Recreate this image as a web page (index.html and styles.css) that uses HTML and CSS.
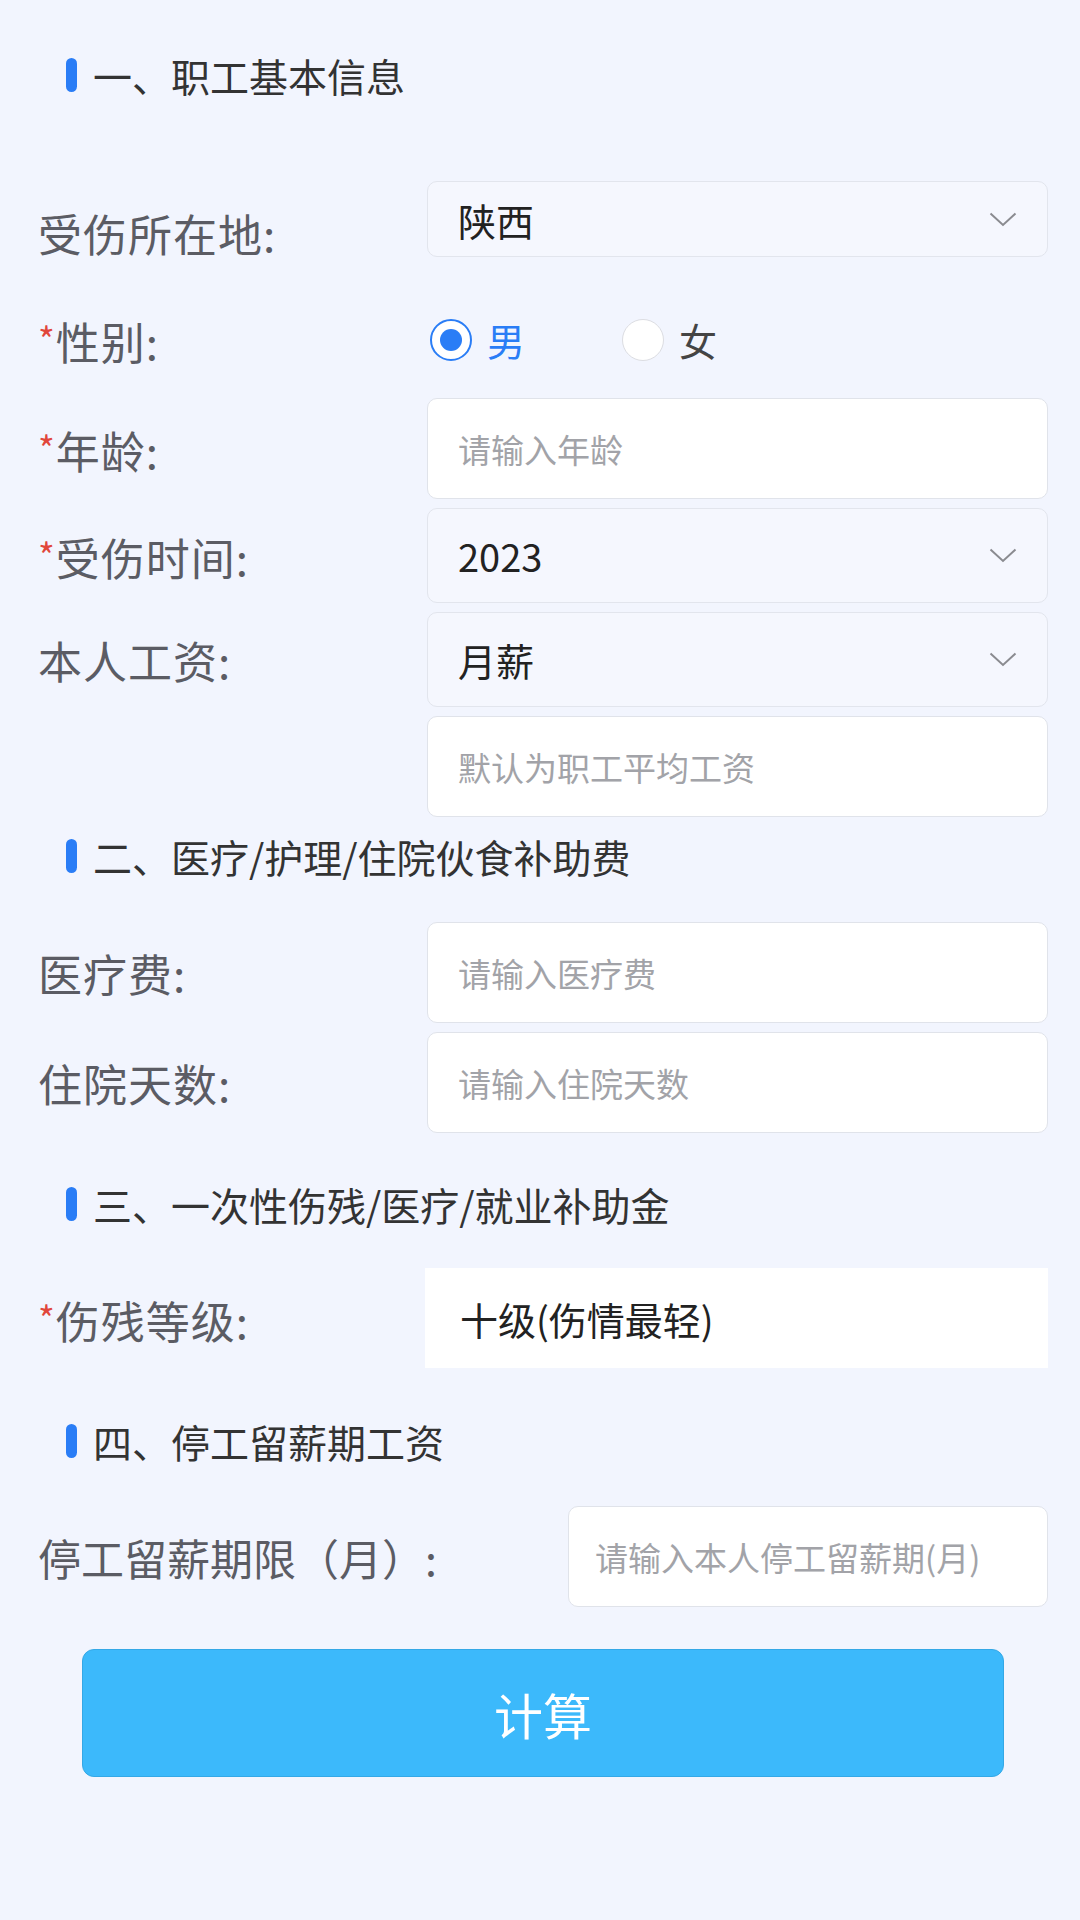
FILE: index.html
```html
<!DOCTYPE html>
<html lang="zh-CN">
<head>
    <meta charset="UTF-8">
    <meta name="viewport" content="width=device-width, initial-scale=1.0">
    <title>工伤赔偿计算器</title>
    <link rel="stylesheet" href="styles.css">
</head>
<body>
    <div class="page">
        <h2 class="section-title title-first">一、职工基本信息</h2>

        <div class="form-row row-location">
            <label class="form-label label-low">受伤所在地:</label>
            <div class="select select-small">
                <span class="select-value">陕西</span>
                <svg class="chevron" width="28" height="15" viewBox="0 0 28 15"><polyline points="1.5,1.5 14,13 26.5,1.5" fill="none" stroke="#8a8b90" stroke-width="2"/></svg>
            </div>
        </div>

        <div class="form-row row-gender">
            <label class="form-label"><span class="required">*</span>性别:</label>
            <div class="radio-group">
                <div class="radio-option checked">
                    <span class="radio"></span>
                    <span class="radio-text">男</span>
                </div>
                <div class="radio-option">
                    <span class="radio"></span>
                    <span class="radio-text">女</span>
                </div>
            </div>
        </div>

        <div class="field-group group-basic">
            <div class="form-row">
                <label class="form-label"><span class="required">*</span>年龄:</label>
                <input class="text-input" type="text" placeholder="请输入年龄">
            </div>
            <div class="form-row">
                <label class="form-label"><span class="required">*</span>受伤时间:</label>
                <div class="select">
                    <span class="select-value">2023</span>
                    <svg class="chevron" width="28" height="15" viewBox="0 0 28 15"><polyline points="1.5,1.5 14,13 26.5,1.5" fill="none" stroke="#8a8b90" stroke-width="2"/></svg>
                </div>
            </div>
            <div class="form-row">
                <label class="form-label">本人工资:</label>
                <div class="select">
                    <span class="select-value">月薪</span>
                    <svg class="chevron" width="28" height="15" viewBox="0 0 28 15"><polyline points="1.5,1.5 14,13 26.5,1.5" fill="none" stroke="#8a8b90" stroke-width="2"/></svg>
                </div>
            </div>
            <div class="form-row">
                <span class="form-label"></span>
                <input class="text-input" type="text" placeholder="默认为职工平均工资">
            </div>
        </div>

        <h2 class="section-title title-medical">二、医疗/护理/住院伙食补助费</h2>

        <div class="field-group group-medical">
            <div class="form-row">
                <label class="form-label">医疗费:</label>
                <input class="text-input" type="text" placeholder="请输入医疗费">
            </div>
            <div class="form-row">
                <label class="form-label">住院天数:</label>
                <input class="text-input" type="text" placeholder="请输入住院天数">
            </div>
        </div>

        <h2 class="section-title title-disability">三、一次性伤残/医疗/就业补助金</h2>

        <div class="form-row row-disability">
            <label class="form-label"><span class="required">*</span>伤残等级:</label>
            <div class="plain-box">十级(伤情最轻)</div>
        </div>

        <h2 class="section-title title-salary">四、停工留薪期工资</h2>

        <div class="form-row row-wide">
            <label class="form-label label-tight">停工留薪期限（月）:</label>
            <input class="text-input input-tight" type="text" placeholder="请输入本人停工留薪期(月)">
        </div>

        <button class="submit-btn" type="button">计算</button>
    </div>
</body>
</html>
```

FILE: styles.css
```css
* {
    box-sizing: border-box;
    margin: 0;
    padding: 0;
    font-family: "Noto Sans CJK SC", "Noto Sans", sans-serif;
}

body {
    background-color: #f2f5fe;
    width: 1080px;
    min-height: 1920px;
}

.page {
    padding: 0 32px 0 38px;
}

.section-title {
    display: flex;
    align-items: center;
    height: 34px;
    padding-left: 28px;
    font-size: 39px;
    font-weight: normal;
    color: #333;
    line-height: 1;
}

.section-title::before {
    content: "";
    width: 11px;
    height: 34px;
    margin-right: 16px;
    border-radius: 6px;
    background-color: #2a7df6;
    flex-shrink: 0;
}

.title-first {
    margin-top: 58px;
}

.title-medical {
    margin-top: 22px;
}

.title-disability {
    margin-top: 54px;
}

.title-salary {
    margin-top: 56px;
}

.form-row {
    display: grid;
    grid-template-columns: 389px 1fr;
    align-items: center;
}

.form-label {
    font-size: 44px;
    line-height: 44px;
    letter-spacing: 1px;
    color: #5b5c64;
    white-space: nowrap;
}

.label-low {
    align-self: start;
    margin-top: 30px;
}

.label-tight {
    font-size: 43px;
    letter-spacing: 0;
}

.required {
    color: #e1463b;
    font-size: 36px;
    vertical-align: 6px;
}

.row-location {
    margin-top: 89px;
}

.row-gender {
    margin-top: 59px;
    height: 44px;
}

.field-group {
    display: flex;
    flex-direction: column;
    gap: 9px;
}

.group-basic {
    margin-top: 38px;
}

.group-medical {
    margin-top: 49px;
}

.select {
    display: flex;
    align-items: center;
    justify-content: space-between;
    height: 95px;
    padding: 0 30px 0 30px;
    background-color: #f5f7fe;
    border: 1.5px solid #e2e5ed;
    border-radius: 10px;
}

.select-small {
    height: 76px;
}

.select-value {
    font-size: 38px;
    color: #222;
}

.chevron {
    display: block;
}

.text-input {
    width: 100%;
    height: 101px;
    padding: 0 30px;
    background-color: #fff;
    border: 1.5px solid #e0e3ea;
    border-radius: 10px;
    font-size: 33px;
    color: #222;
    outline: none;
}

.text-input::placeholder {
    color: #a2a3a8;
}

.input-tight {
    padding: 0 26px;
}

.radio-group {
    display: flex;
    align-items: center;
    height: 44px;
    padding-left: 3px;
}

.radio-option {
    display: flex;
    align-items: center;
    width: 192px;
}

.radio {
    width: 42px;
    height: 42px;
    border-radius: 50%;
    border: 1.5px solid #dcdde2;
    background-color: #fff;
    display: flex;
    align-items: center;
    justify-content: center;
    flex-shrink: 0;
}

.radio-text {
    margin-left: 15px;
    font-size: 38px;
    line-height: 1;
    color: #444;
}

.checked .radio {
    border: 2.5px solid #2a7df6;
}

.checked .radio::after {
    content: "";
    width: 22px;
    height: 22px;
    border-radius: 50%;
    background-color: #2a7df6;
}

.checked .radio-text {
    color: #2a7df6;
}

.row-disability {
    margin-top: 47px;
}

.plain-box {
    height: 100px;
    margin-left: -2px;
    padding-left: 35px;
    display: flex;
    align-items: center;
    background-color: #fff;
    font-size: 38px;
    color: #222;
}

.row-wide {
    grid-template-columns: 530px 1fr;
    margin-top: 48px;
}

.submit-btn {
    display: block;
    width: 922px;
    height: 128px;
    margin: 42px 0 0 44px;
    background-color: #3cb9fb;
    border: 1.5px solid #34a8e6;
    border-radius: 12px;
    font-size: 49px;
    color: #fff;
    cursor: pointer;
}
```
